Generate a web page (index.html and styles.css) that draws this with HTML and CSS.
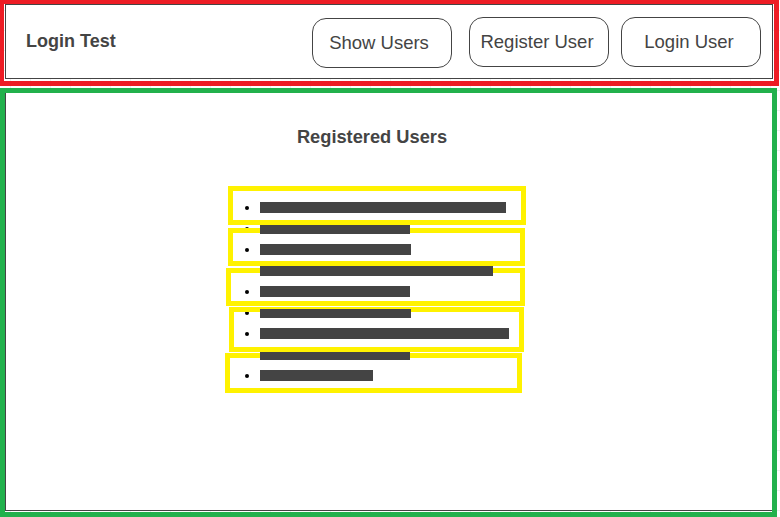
FILE: index.html
```html
<!DOCTYPE html>
<html lang="en">
<head>
<meta charset="utf-8">
<title>Login Test</title>
<link rel="stylesheet" href="styles.css">
</head>
<body>
<div class="page">
  <header class="topbar">
    <h1 class="brand">Login Test</h1>
    <nav class="nav">
      <button class="btn btn-show">Show Users</button>
      <button class="btn btn-register">Register User</button>
      <button class="btn btn-login">Login User</button>
    </nav>
  </header>
  <main class="main">
    <section class="users">
      <h2 class="users-title">Registered Users</h2>
      <ul class="user-list">
        <li><span class="bar" style="width:246px"></span></li>
        <li><span class="bar cut" style="width:150px"></span></li>
        <li><span class="bar" style="width:151px"></span></li>
        <li><span class="bar cut2" style="width:233px"></span></li>
        <li><span class="bar" style="width:150px"></span></li>
        <li><span class="bar cut" style="width:151px"></span></li>
        <li><span class="bar" style="width:249px"></span></li>
        <li><span class="bar cut3" style="width:150px"></span></li>
        <li><span class="bar" style="width:113px"></span></li>
      </ul>
    </section>
  </main>
</div>

<div class="mark mark-red"></div>
<div class="mark mark-green"></div>
<div class="mark mark-yellow y1"></div>
<div class="mark mark-yellow y2"></div>
<div class="mark mark-yellow y3"></div>
<div class="mark mark-yellow y4"></div>
<div class="mark mark-yellow y5"></div>
</body>
</html>
```

FILE: styles.css
```css
* { box-sizing: border-box; }

html, body {
  margin: 0;
  padding: 0;
}

body {
  position: relative;
  width: 780px;
  height: 517px;
  overflow: hidden;
  font-family: "Liberation Sans", Arial, sans-serif;
  color: #444;
  background-color: #fff;
  background-image:
    linear-gradient(to right, #efefef 1px, transparent 1px),
    linear-gradient(to bottom, #efefef 1px, transparent 1px);
  background-size: 20px 20px;
  background-position: 10px 10px;
}

.page {
  padding: 4px 7px 0 5px;
}

/* ---------- header ---------- */
.topbar {
  display: flex;
  align-items: flex-start;
  height: 75px;
  border: 1px solid #444;
  background: #fff;
}

.brand {
  margin: 26px 0 0 20px;
  font-size: 18px;
  line-height: 21px;
  font-weight: bold;
  color: #444;
}

.nav {
  display: flex;
  align-items: flex-start;
  margin-left: auto;
  margin-right: 11px;
  padding-top: 12px;
}

.btn {
  width: 140px;
  height: 50px;
  padding: 0 4px 0 0;
  border: 1px solid #444;
  border-radius: 14px;
  background: #fff;
  font-family: "Liberation Sans", Arial, sans-serif;
  font-size: 18.5px;
  color: #444;
  text-align: center;
}

.btn-show { margin-top: 1px; padding-right: 6px; }
.btn-register { margin-left: 17px; }
.btn-login { margin-left: 12px; }

/* ---------- main ---------- */
.main {
  margin-top: 10px;
  height: 422px;
  border: 1px solid #444;
  background: #fff;
}

.users {
  width: 320px;
  margin-left: 206px;
  padding-top: 36px;
}

.users-title {
  margin: 0;
  font-size: 18.25px;
  line-height: 21px;
  font-weight: bold;
  text-align: center;
  color: #444;
}

.user-list {
  margin: 50px 0 0;
  padding-left: 48px;
  font-size: 14px;
  line-height: 21px;
  color: #000;
}

.user-list li {
  height: 21px;
}

.bar {
  display: inline-block;
  vertical-align: top;
  height: 11px;
  margin-top: 5px;
  background: #444;
  position: relative;
  z-index: 5;
}

.bar.cut { height: 9px; margin-top: 7px; }
.bar.cut2 { height: 10px; margin-top: 6px; }
.bar.cut3 { height: 8px; margin-top: 8px; }

/* ---------- annotation overlays ---------- */
.mark {
  position: absolute;
  z-index: 2;
  pointer-events: none;
}

.mark-red {
  left: -1px;
  top: -1px;
  width: 780px;
  height: 87px;
  border: 5px solid #ed1c24;
}

.mark-green {
  left: 0;
  top: 88px;
  width: 777px;
  height: 429px;
  border: 5px solid #22b14c;
}

.mark-yellow {
  border: 5px solid #fff200;
}

.y1 { left: 228px; top: 186px; width: 298px; height: 39px; }
.y2 { left: 228px; top: 228px; width: 297px; height: 38px; }
.y3 { left: 226px; top: 268px; width: 299px; height: 38px; }
.y4 { left: 229px; top: 307px; width: 295px; height: 45px; }
.y5 { left: 225px; top: 353px; width: 297px; height: 40px; }
```
